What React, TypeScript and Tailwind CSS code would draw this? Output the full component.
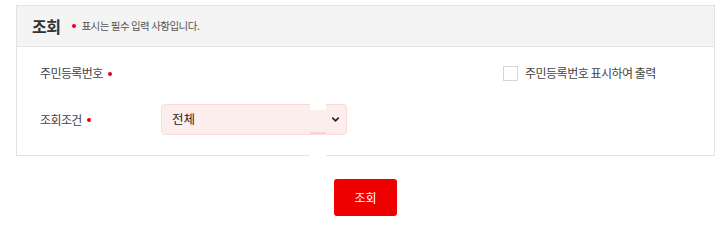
import { ChevronDown } from 'lucide-react';

const font = { fontFamily: '"Noto Sans CJK KR", "Noto Sans", sans-serif' };

function Req() {
  return <span className="inline-block w-[4px] h-[4px] rounded-full bg-[#e60012] ml-[5px] mb-[2px] align-middle" />;
}

export default function App() {
  return (
    <div className="w-[728px] h-[235px] bg-white px-4 pt-[5px]" style={font}>
      {/* search panel */}
      <div className="relative border border-[#e3e3e3] w-[699px]">
        <div className="h-[41px] bg-[#f4f4f4] border-b border-[#e3e3e3] flex items-center pl-[15px]">
          <h2 className="text-[16px] font-bold text-[#333] leading-none tracking-[-0.5px]">조회</h2>
          <span className="inline-block w-[4px] h-[4px] rounded-full bg-[#e60012] ml-[12px] mr-[5px]" />
          <span className="text-[10.5px] text-[#555] tracking-[-0.5px]">표시는 필수 입력 사항입니다.</span>
        </div>

        <div className="pt-[11px] pb-[20px] pl-[23px]">
          <div className="flex items-center h-[30px]">
            <div className="w-[121px] text-[12px] text-[#444] tracking-[-0.6px]">
              주민등록번호<Req />
            </div>
            <label className="flex items-center ml-[342px] gap-[7px] text-[12px] text-[#444] tracking-[-0.5px]">
              <span className="w-[15px] h-[15px] border border-[#d6d6d6] bg-white" />
              주민등록번호 표시하여 출력
            </label>
          </div>

          <div className="flex items-center h-[31px] mt-[16px]">
            <div className="w-[121px] text-[12px] text-[#444] tracking-[-0.6px]">
              조회조건<Req />
            </div>
            <div className="relative w-[186px] h-[31px] rounded-[4px] border border-[#fadada] bg-[#fdeeee] flex items-center justify-between pl-[10px] pr-[5px]">
              <span className="text-[12.5px] text-[#222]">전체</span>
              <ChevronDown size={11} strokeWidth={3.5} className="text-[#222]" />
              <span className="absolute left-[148px] top-[-1px] w-[16px] h-[6px] bg-white" />
              <span className="absolute left-[148px] bottom-[0px] w-[16px] h-[2px] bg-[#fcd3d3]" />
            </div>
          </div>
        </div>
        <span className="absolute left-[293px] bottom-[-3px] w-[16px] h-[6px] bg-white" />
      </div>

      <div className="flex justify-center w-[699px] mt-[23px]">
        <button className="w-[63px] h-[37px] rounded-[3px] bg-[#ee0000] text-white text-[12px]">조회</button>
      </div>
    </div>
  );
}
